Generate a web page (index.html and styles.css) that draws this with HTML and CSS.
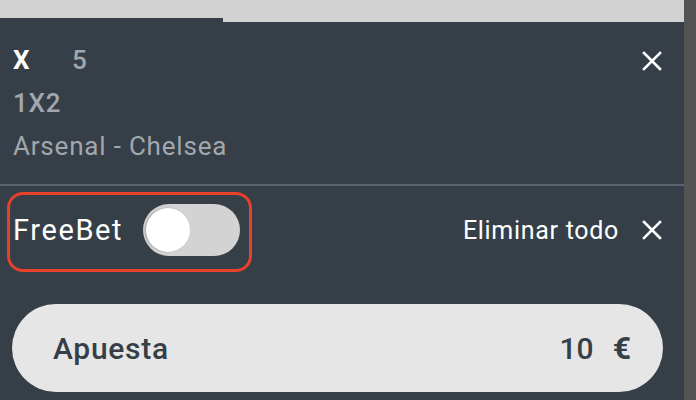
FILE: index.html
```html
<!DOCTYPE html>
<html lang="es">
<head>
<meta charset="utf-8">
<link rel="stylesheet" href="styles.css">
</head>
<body>
<div class="page">
  <div class="main">
    <div class="tabs">
      <div class="tab tab-left"></div>
      <div class="tab tab-right"></div>
    </div>
    <div class="selection">
      <div class="sel-info">
        <div class="sel-row">
          <span class="pick">X</span>
          <span class="odds">5</span>
        </div>
        <div class="market">1X2</div>
        <div class="event">Arsenal - Chelsea</div>
      </div>
      <button class="close close-sel" aria-label="Cerrar">
        <svg viewBox="0 0 20 20" width="20" height="20"><path d="M2 2L18 18M18 2L2 18" stroke="#fff" stroke-width="2.6" stroke-linecap="square"/></svg>
      </button>
    </div>
    <div class="options">
      <div class="freebet">
        <span class="freebet-label">FreeBet</span>
        <span class="toggle"><span class="knob"></span></span>
      </div>
      <div class="remove-all">
        <span class="remove-label">Eliminar todo</span>
        <svg viewBox="0 0 20 20" width="20" height="20"><path d="M2 2L18 18M18 2L2 18" stroke="#fff" stroke-width="2.6" stroke-linecap="square"/></svg>
      </div>
    </div>
    <div class="stake">
      <span class="stake-label">Apuesta</span>
      <span class="stake-value"><span class="amount">10</span><span class="currency">€</span></span>
    </div>
  </div>
  <div class="scrollbar"></div>
</div>
</body>
</html>
```
FILE: styles.css
```css
html, body {
  margin: 0;
  padding: 0;
  height: 100%;
}
body {
  background: #363f48;
  font-family: Roboto, "Liberation Sans", sans-serif;
  overflow: hidden;
}
.page {
  display: flex;
  height: 400px;
}
.main {
  flex: 1;
  display: flex;
  flex-direction: column;
}
.scrollbar {
  width: 12px;
  background: #545454;
}
.tabs {
  display: flex;
  align-items: flex-start;
  height: 22px;
}
.tab {
  background: #d3d3d3;
}
.tab-left {
  width: 223px;
  height: 18px;
}
.tab-right {
  flex: 1;
  height: 22px;
}
.selection {
  display: flex;
  justify-content: space-between;
  align-items: flex-start;
  padding: 17px 22px 16px 13px;
  border-bottom: 2px solid #5a646e;
}
.sel-info {
  font-size: 26px;
  line-height: 43px;
  letter-spacing: 0.8px;
}
.sel-row {
  display: flex;
}
.pick {
  color: #fff;
  font-weight: 700;
  width: 59px;
}
.odds {
  color: #a2a7ad;
  font-weight: 500;
}
.market, .event {
  color: #a2a7ad;
}
.market {
  font-weight: 500;
}
.close {
  background: none;
  border: 0;
  padding: 0;
  margin-top: 12px;
  display: flex;
}
.options {
  display: flex;
  justify-content: space-between;
  align-items: flex-start;
  padding: 6px 22px 0 7px;
}
.freebet {
  display: flex;
  align-items: flex-start;
  width: 245px;
  box-sizing: border-box;
  border: 3px solid #e8412b;
  border-radius: 16px;
  padding: 9px 9px 13px 3px;
  justify-content: space-between;
}
.freebet-label {
  color: #fff;
  font-size: 29px;
  letter-spacing: 1.6px;
  line-height: 52px;
}
.toggle {
  width: 97px;
  height: 52px;
  border-radius: 26px;
  background: #d3d3d3;
  display: flex;
  align-items: center;
  padding-left: 3px;
  box-sizing: border-box;
}
.knob {
  width: 44px;
  height: 44px;
  border-radius: 50%;
  background: #fff;
  box-shadow: -1px 0 2px rgba(0,0,0,0.25);
}
.remove-all {
  display: flex;
  align-items: center;
  gap: 23px;
  height: 80px;
  padding-bottom: 4px;
  box-sizing: border-box;
}
.remove-label {
  color: #fff;
  font-size: 25px;
  letter-spacing: 0.7px;
}
.stake {
  margin: 32px 21px 0 12px;
  height: 88px;
  border-radius: 44px;
  background: #e6e6e6;
  display: flex;
  align-items: center;
  justify-content: space-between;
  padding: 0 32px 0 41px;
  color: #363f48;
  font-weight: 500;
}
.stake-label {
  font-size: 30px;
  letter-spacing: 0.7px;
}
.stake-value {
  font-size: 30px;
  display: flex;
  align-items: baseline;
  gap: 19px;
}
.currency {
  font-weight: 700;
  font-size: 32px;
}
```
